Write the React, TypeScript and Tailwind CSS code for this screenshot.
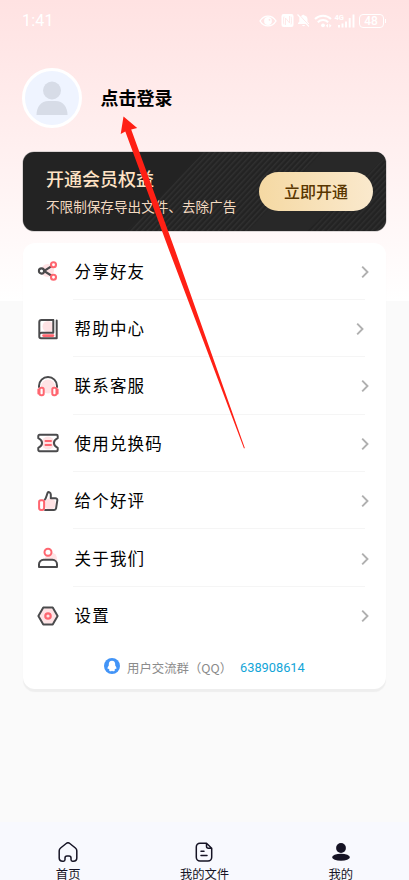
import React from "react";

const DARK = "#4a4a4c";
const RED = "#ff6670";
const PINK = "#ffe3e5";

function ShareIcon() {
  return (
    <svg className="size-6" viewBox="0 0 24 24" fill="none" strokeWidth="2.1">
      <circle cx="11.500" cy="11.500" r="6.5" fill={PINK} />
      <path d="M16 6.800 8 12l8 5" stroke={DARK} />
      <circle cx="5.500" cy="12" r="2.600" stroke={DARK} fill="#fff" />
      <circle cx="17.500" cy="5.800" r="2.500" stroke={RED} fill="#fff" />
      <circle cx="17.500" cy="18.200" r="2.500" stroke={RED} fill="#fff" />
    </svg>
  );
}
function BookIcon() {
  return (
    <svg className="size-6" viewBox="0 0 24 24" fill="none" strokeWidth="2" strokeLinejoin="round" strokeLinecap="round">
      <circle cx="12" cy="9.500" r="5.500" fill={PINK} />
      <path d="M17 2.900H5.500a2.200 2.200 0 0 0-2.200 2.200v14.400a1.700 1.700 0 0 0 1.700 1.700H20.700V3.500M17.300 3v12.700H5.500a2.200 2.200 0 0 0-2.200 2.200" stroke={DARK} />
      <path d="M7.500 18.600h9.500" stroke={RED} strokeWidth="2.600" />
    </svg>
  );
}
function HeadsetIcon() {
  return (
    <svg className="size-6" viewBox="0 0 24 24" fill="none" strokeWidth="2" strokeLinecap="round">
      <circle cx="12" cy="12.500" r="7" fill={PINK} />
      <path d="M3 13v-1a9 9 0 0 1 18 0v1" stroke={DARK} />
      <path d="M2.400 15.500v4M21.600 15.500v4" stroke={RED} />
      <rect x="3.500" y="13.700" width="4.200" height="7.500" rx="1.700" stroke={RED} fill="#fff" />
      <rect x="16.300" y="13.700" width="4.200" height="7.500" rx="1.700" stroke={RED} fill="#fff" />
    </svg>
  );
}
function TicketIcon() {
  return (
    <svg className="size-6" viewBox="0 0 24 24" fill="none" strokeWidth="2" strokeLinejoin="round" strokeLinecap="round">
      <circle cx="12" cy="12" r="6.500" fill={PINK} />
      <path d="M3.500 3.800h17a1.200 1.200 0 0 1 1.200 1.200v2.200c-5 2.500-5 7.300 0 9.700V19a1.200 1.200 0 0 1-1.200 1.200h-17A1.200 1.200 0 0 1 2.300 19v-2.100c5-2.400 5-7.200 0-9.700V5a1.200 1.200 0 0 1 1.200-1.200Z" stroke={DARK} />
      <path d="M9.500 10h5.500M9.500 14h5.500" stroke={RED} strokeWidth="2" />
    </svg>
  );
}
function ThumbIcon() {
  return (
    <svg className="size-6" viewBox="0 0 24 24" fill="none" strokeWidth="2" strokeLinejoin="round">
      <circle cx="14" cy="15" r="5.800" fill={PINK} />
      <path d="M8.300 11.300c2-1.500 2.200-4.500 3.200-7.300 1-1.700 3.300-.5 3.300 1.500v3.700h4.500c1.400 0 2.200 1 2 2.200l-1.200 7.800c-.2 1.200-.8 1.700-2 1.700H8.300" stroke={DARK} />
      <rect x="3.100" y="11.200" width="5" height="9.700" rx="1.800" stroke={RED} fill="#fff" />
    </svg>
  );
}
function PersonIcon() {
  return (
    <svg className="size-6" viewBox="0 0 24 24" fill="none" strokeWidth="2">
      <circle cx="15" cy="12.500" r="6" fill={PINK} />
      <circle cx="12" cy="6.300" r="3.500" stroke={RED} fill="#fff" />
      <path d="M3 20.900v-2.600a4.500 4.500 0 0 1 4.500-4.500h9a4.500 4.500 0 0 1 4.500 4.500v2.600Z" stroke={DARK} fill="#fff" strokeLinejoin="round" />
    </svg>
  );
}
function HexIcon() {
  return (
    <svg className="size-6" viewBox="0 0 24 24" fill="none" strokeWidth="2" strokeLinejoin="round">
      <circle cx="12" cy="12" r="8" fill={PINK} />
      <path d="M7.300 3.600h9.400L21.600 12l-4.900 8.400H7.300L2.400 12Z" stroke={DARK} />
      <circle cx="12" cy="12" r="2.700" stroke={RED} strokeWidth="2.200" />
    </svg>
  );
}

const items = [
  { label: "分享好友", Icon: ShareIcon },
  { label: "帮助中心", Icon: BookIcon, inset: true },
  { label: "联系客服", Icon: HeadsetIcon },
  { label: "使用兑换码", Icon: TicketIcon },
  { label: "给个好评", Icon: ThumbIcon },
  { label: "关于我们", Icon: PersonIcon },
  { label: "设置", Icon: HexIcon },
];

function StatusBar() {
  return (
    <header className="flex h-10 items-center justify-between pl-[22px] pr-[23px] pt-px text-white">
      <span className="text-[16px] leading-5 tracking-[0.200px] font-['Roboto',sans-serif]">1:41</span>
      <div className="flex items-center">
        <svg className="h-3 w-[18px]" viewBox="0 0 18 12" fill="none" stroke="currentColor" strokeWidth="1.400">
          <path d="M1 6c4-6.500 12-6.500 16 0-4 6.500-12 6.500-16 0Z" />
          <circle cx="9" cy="6" r="3.900" fill="currentColor" stroke="none" />
          <circle cx="10.500" cy="4.800" r=".9" fill="#ffe3e3" stroke="none" />
        </svg>
        <svg className="ml-1 h-[13px] w-[13px]" viewBox="0 0 13 13">
          <rect x="0.500" y="0" width="12" height="13" rx="2" fill="currentColor" />
          <path d="M4.500 11V4l4 5V2M3 2.500c-.6 1-.6 7 0 8M10 2.500c.6 1 .6 7 0 8" stroke="#ffe3e3" strokeWidth=".8" fill="none" />
        </svg>
        <svg className="ml-[3px] h-[13px] w-[13px]" viewBox="0 0 13 13">
          <path d="M1 10V9l1.300-1.200V5C2.300 3 3.500 2 5 1.600 5.100.3 7.400.3 7.500 1.600 9.500 2 10.500 3.300 10.500 5v3l1.500 1.200V10ZM5 11h3c-.3 1.600-2.700 1.600-3 0Z" fill="currentColor" />
          <path d="m1.500 0 11.500 12.500" stroke="#ffe3e3" strokeWidth="1" />
          <path d="m.5 .5 11.500 12" stroke="currentColor" strokeWidth="1.100" />
        </svg>
        <svg className="ml-1 h-[14px] w-[18px]" viewBox="0 0 18 14" fill="none" stroke="currentColor" strokeWidth="2">
          <path d="M1 5c4.500-4.500 11.500-4.500 16 0M3.800 8.200c3-2.900 7.400-2.900 10.400 0" />
          <circle cx="9" cy="11.300" r="1.900" fill="currentColor" stroke="none" />
          <path d="m11.800 11.800 2.200-2v4ZM17.500 11.800l-2.200-2v4Z" fill="currentColor" stroke="none" />
        </svg>
        <div className="relative ml-[3px] h-[14px] w-[20px]">
          <span className="absolute left-0 top-0 text-[7.500px] leading-[7px] font-bold font-['Roboto',sans-serif]">4G</span>
          <svg className="size-full" viewBox="0 0 20 14" stroke="currentColor" strokeWidth="1.900">
            <path d="M4 11v2.500M7.500 9.500v4M11 7.500v6M14.700 4v9.500M18.500.5v13" />
          </svg>
        </div>
        <div className="ml-1 flex h-[14px] w-[25px] items-center justify-center rounded-[4px] border border-white text-[12px] leading-none font-medium font-['Roboto',sans-serif]">48</div>
        <div className="ml-px h-1 w-[1.500px] bg-white" />
      </div>
    </header>
  );
}

function MemberBanner() {
  return (
    <section className="relative mx-[23px] flex h-[79px] items-center justify-between overflow-hidden rounded-[11px] bg-[#232323] pl-[23px] pr-[13px] ring-[0.500px] ring-[#b9b5b5]">
      <svg className="absolute inset-0 size-full" viewBox="0 0 363 79" preserveAspectRatio="none">
        <defs>
          <pattern id="stripes" width="4" height="4" patternUnits="userSpaceOnUse" patternTransform="rotate(43)">
            <rect width="1.500" height="4" fill="#363636" />
          </pattern>
        </defs>
        <path d="M181 0h118l-75 80H103Z" fill="url(#stripes)" opacity=".7" />
        <path d="M299 0h64v5l-80 75h-59Z" fill="#282828" />
        <path d="M363 5v75h-80Z" fill="url(#stripes)" opacity=".6" />
      </svg>
      <div className="relative">
        <h2 className="text-[18px] leading-[27px] font-medium text-[#ffe3c5]">开通会员权益</h2>
        <p className="mt-[2px] text-[13.600px] leading-[25px] text-[#f3dac1] whitespace-nowrap">不限制保存导出文件、去除广告</p>
      </div>
      <button className="relative h-[39px] w-[114px] rounded-full bg-linear-to-r from-[#f5d9a3] to-[#fae9cd] pb-[2px] text-[16px] leading-none font-medium text-[#593600]">
        立即开通
      </button>
    </section>
  );
}

export default function App() {
  return (
    <div className="relative flex h-[880px] w-[409px] flex-col overflow-hidden bg-[#fafafa] font-['Noto_Sans_CJK_SC',sans-serif] text-black">
      <div className="h-[301px] shrink-0 bg-linear-to-b from-[#ffe2e2] via-[#fff0f0] to-white">
        <StatusBar />
        <section className="mt-7 mb-6 flex h-[60px] items-center pl-[22px]">
          <div className="size-[60px] rounded-full border-[3px] border-white bg-[#eff4ff]">
            <svg viewBox="0 0 54 54" className="size-full" fill="#d7dce7">
              <circle cx="27" cy="19.500" r="9" />
              <path d="M11.500 44c0-8 4.500-14 12-14h7c7.500 0 12 6 12 14Z" />
            </svg>
          </div>
          <h1 className="mb-[2px] ml-[18.500px] text-[18px] leading-7 font-bold">点击登录</h1>
        </section>
        <MemberBanner />
        <main className="mx-[23px] mt-[11.500px] h-[446px] rounded-[12px] bg-white shadow-[0_3px_1px_#eeeeee]">
          {items.map(({ label, Icon, inset }, i) => (
            <div key={label} className="flex h-[57.400px] items-center pl-[13px] pr-[21px]">
              <Icon />
              <div className={`ml-[13px] flex h-full flex-1 items-center justify-between border-b ${i < 6 ? "border-[#f5f5f5]" : "border-transparent"}`}>
                <span className="pl-[1.500px] text-[16.500px] leading-6 tracking-[1.200px]">{label}</span>
                <svg className={`mt-[2px] h-3 w-2 ${inset ? "mr-[1px]" : "-mr-[4px]"}`} viewBox="0 0 8 12" fill="none" stroke="#b0b0b0" strokeWidth="1.900">
                  <path d="m1.200.7 5.300 5.300-5.300 5.300" />
                </svg>
              </div>
            </div>
          ))}
          <div className="mt-[11px] flex h-6 items-center pl-[81px] pt-[1px]">
            <svg className="mb-[3px] size-4" viewBox="0 0 16 16">
              <circle cx="8" cy="8" r="8" fill="#4294f7" />
              <path d="M8 2.700c-2.300 0-3.200 1.700-3.200 3.600v1.200c-1 1.200-1.600 2.600-1 3.500.3.300.8-.2 1-.5.100.7.500 1.200.9 1.600-.8.400-.8 1.200.5 1.200.8 0 1.500-.2 1.800-.6.300.4 1 .6 1.800.6 1.300 0 1.300-.8.500-1.200.4-.4.800-.9.900-1.600.2.300.7.800 1 .5.600-.9 0-2.300-1-3.500V6.300c0-1.900-.9-3.600-3.200-3.600Z" fill="#fff" />
            </svg>
            <span className="ml-[7px] w-[113px] text-[12.400px] leading-4 text-[#8b8b8b] whitespace-nowrap">用户交流群（QQ）</span>
            <span className="text-[12.800px] leading-4 text-[#12a5d8] font-['Roboto',sans-serif]">638908614</span>
          </div>
        </main>
      </div>

      <nav className="mt-auto grid h-[58px] shrink-0 grid-cols-3 bg-[#f8f9fe] text-[12.300px] leading-[12px] text-[#151324]">
        <div className="flex flex-col items-center pt-5">
          <svg className="size-5" viewBox="0 0 20 20" fill="none" stroke="currentColor" strokeWidth="1.500" strokeLinejoin="round">
            <path d="M7 16v1.500c0 1-.5 1.700-1.500 1.700H4.700c-2 0-3.500-1.300-3.500-3.200V8.700c0-1.200.5-2 1.400-2.700l5.600-4.500c1.100-.9 2.500-.9 3.600 0L17.400 6c.9.700 1.400 1.500 1.400 2.700V16c0 1.900-1.500 3.200-3.500 3.200h-.8c-1 0-1.500-.7-1.500-1.700V16c0-1.400-.8-2.100-2-2.100H9c-1.200 0-2 .7-2 2.100Z" />
          </svg>
          <span className="mt-[6px]">首页</span>
        </div>
        <div className="flex flex-col items-center pt-5">
          <svg className="size-5" viewBox="0 0 20 20" fill="none" stroke="currentColor" strokeWidth="1.500" strokeLinejoin="round" strokeLinecap="round">
            <path d="M12.500 1.200H6A3.700 3.700 0 0 0 2.300 5v10.300A3.700 3.700 0 0 0 6 19h8a3.700 3.700 0 0 0 3.700-3.700V6.200l-5.200-5v3c0 1.400.7 2 2 2h3.200M7 9.300h3M7 13.500h6" />
          </svg>
          <span className="mt-[6px]">我的文件</span>
        </div>
        <div className="flex flex-col items-center pt-5">
          <svg className="size-5" viewBox="0 0 20 20" fill="currentColor">
            <circle cx="10" cy="6" r="4.900" />
            <ellipse cx="10" cy="15.300" rx="8.900" ry="3.500" />
          </svg>
          <span className="mt-[6px]">我的</span>
        </div>
      </nav>

      <svg className="pointer-events-none absolute inset-0 h-[880px] w-[409px]" viewBox="0 0 409 880">
        <path d="M123.500 116.500 137.200 128l-6 1.500L175 250l69.800 198-.8.500L169 250 125.300 131.500l-4.600 2.500Z" fill="#ff2015" />
      </svg>
    </div>
  );
}
